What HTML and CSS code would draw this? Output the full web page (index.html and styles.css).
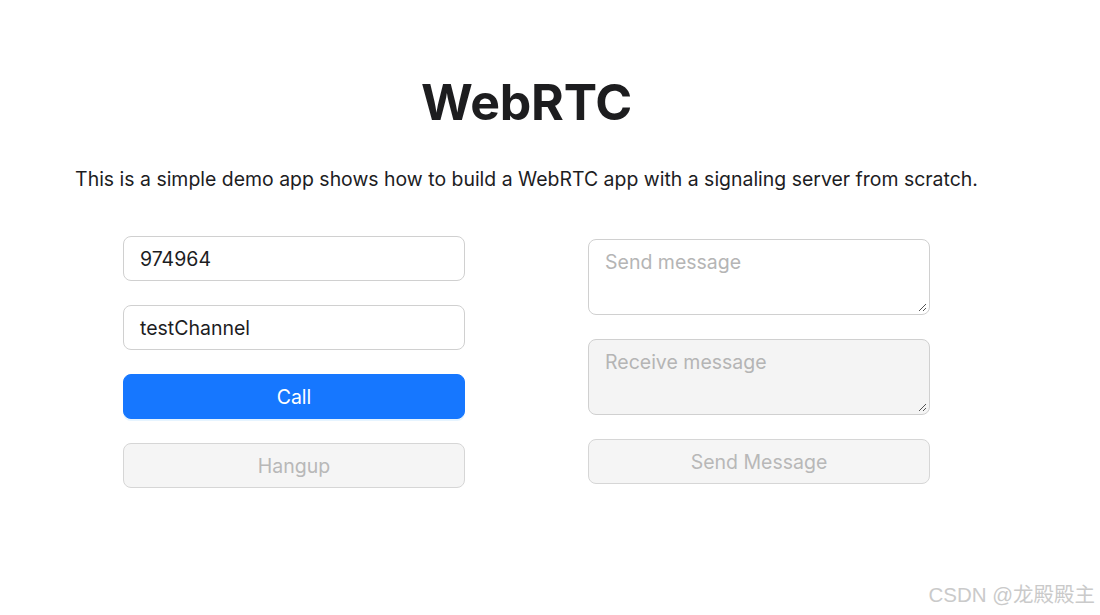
FILE: index.html
```html
<!DOCTYPE html>
<html lang="en">
<head>
<meta charset="utf-8">
<title>WebRTC</title>
<link rel="stylesheet" href="styles.css">
</head>
<body>
<div class="page">
  <h1 class="title">WebRTC</h1>
  <p class="intro">This is a simple demo app shows how to build a WebRTC app with a signaling server from scratch.</p>
  <div class="columns">
    <div class="col">
      <div class="field">974964</div>
      <div class="field">testChannel</div>
      <div class="btn btn-primary">Call</div>
      <div class="btn btn-disabled">Hangup</div>
    </div>
    <div class="col col-right">
      <div class="area"><span class="placeholder">Send message</span><svg class="grip" width="10" height="10" viewBox="0 0 10 10"><path d="M9 2 L2 9 M9 6 L6 9" stroke="#555" stroke-width="1"/></svg></div>
      <div class="area area-disabled"><span class="placeholder">Receive message</span><svg class="grip" width="10" height="10" viewBox="0 0 10 10"><path d="M9 2 L2 9 M9 6 L6 9" stroke="#555" stroke-width="1"/></svg></div>
      <div class="btn btn-disabled">Send Message</div>
    </div>
  </div>
</div>
<div class="watermark">CSDN @龙殿殿主</div>
</body>
</html>
```
FILE: styles.css
```css
* { box-sizing: border-box; }
html, body { margin: 0; padding: 0; background: #fff; }
body {
  font-family: Inter, "Noto Sans", "Noto Sans CJK SC", sans-serif;
  color: #1d1d1f;
  width: 1100px;
  height: 615px;
  overflow: hidden;
  position: relative;
}
.page {
  width: 1053px;
  padding-top: 70px;
}
.title {
  margin: 0;
  text-align: center;
  font-size: 50px;
  line-height: 64px;
  font-weight: 700;
  color: #1d1d1f;
  letter-spacing: -0.2px;
}
.intro {
  margin: 33px 0 0;
  text-align: center;
  font-size: 19.45px;
  line-height: 24px;
  color: #1d1d1f;
}
.columns {
  display: flex;
  justify-content: center;
  gap: 123px;
  margin-top: 45px;
}
.col {
  width: 342px;
  display: flex;
  flex-direction: column;
  gap: 24px;
}
.col-right {
  padding-top: 3px;
}
.field {
  height: 45px;
  border: 1px solid #d0d0d0;
  border-radius: 8px;
  padding: 0 16px;
  display: flex;
  align-items: center;
  font-size: 19.5px;
  color: #1d1d1f;
  background: #fff;
}
.btn {
  height: 45px;
  border-radius: 8px;
  display: flex;
  align-items: center;
  justify-content: center;
  font-size: 19.5px;
}
.btn-primary {
  background: #1677ff;
  color: #fff;
  border: 1px solid #1677ff;
  box-shadow: 0 2px 0 rgba(5, 145, 255, 0.1);
}
.btn-disabled {
  background: #f5f5f5;
  color: #b8b8b8;
  border: 1px solid #d6d6d6;
}
.area {
  position: relative;
  height: 76px;
  border: 1px solid #d0d0d0;
  border-radius: 8px;
  padding: 10px 16px;
  font-size: 19.5px;
  line-height: 24px;
  background: #fff;
}
.area-disabled {
  background: #f4f4f4;
}
.placeholder {
  color: #b5b5b5;
}
.grip {
  position: absolute;
  right: 2px;
  bottom: 2px;
}
.watermark {
  position: absolute;
  right: 5px;
  bottom: 7px;
  font-size: 20.5px;
  color: #cacaca;
  font-family: "Liberation Sans", "Noto Sans CJK SC", sans-serif;
}
```
